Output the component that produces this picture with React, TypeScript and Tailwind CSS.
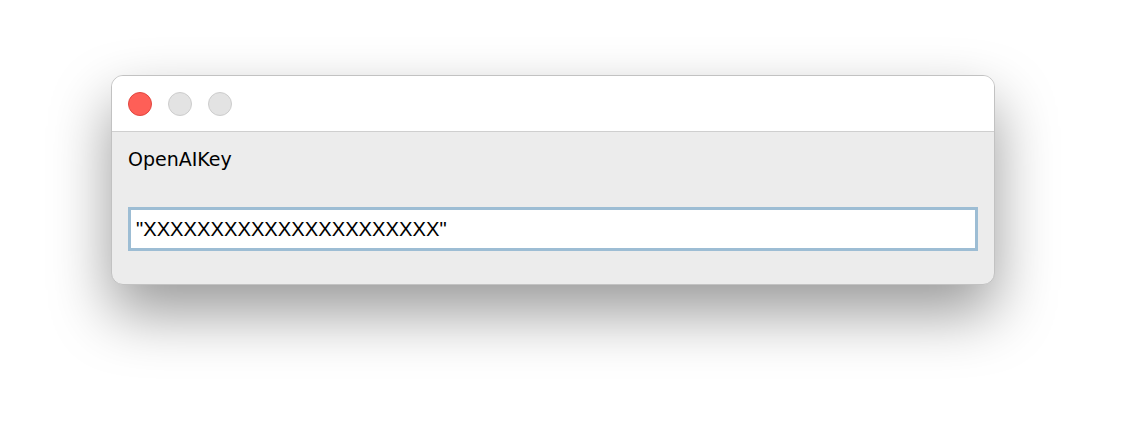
import React, { useState } from 'react';

export default function App() {
  const [value, setValue] = useState('"XXXXXXXXXXXXXXXXXXXXXX"');

  return (
    <div className="w-[1126px] h-[432px] bg-white pt-[75px] pl-[111px]">
      <div className="w-[884px] h-[210px] rounded-[12px] border border-[#c2c2c2] bg-[#ececec] overflow-hidden shadow-[0_28px_60px_rgba(0,0,0,0.4)] flex flex-col">
        {/* title bar */}
        <div className="h-[56px] bg-white border-b border-[#cfcfcf] flex items-center pl-[16px] gap-[16px]">
          <div className="w-[24px] h-[24px] rounded-full bg-[#fe5f57] border border-[#e2463f]" />
          <div className="w-[24px] h-[24px] rounded-full bg-[#e3e3e3] border border-[#cdcdcd]" />
          <div className="w-[24px] h-[24px] rounded-full bg-[#e3e3e3] border border-[#cdcdcd]" />
        </div>

        <div className="flex flex-col px-[16px] pt-[15px]">
          <div className="text-[19px] leading-[24px] text-black font-['DejaVu_Sans',sans-serif]">
            OpenAIKey
          </div>
          <input
            className="mt-[36px] w-[850px] h-[44px] bg-white border-[3px] border-[#9dbdd4] px-[5px] text-[20.2px] text-black font-['Liberation_Sans',Arial,sans-serif] outline-none"
            value={value}
            onChange={(e) => setValue(e.target.value)}
          />
        </div>
      </div>
    </div>
  );
}
